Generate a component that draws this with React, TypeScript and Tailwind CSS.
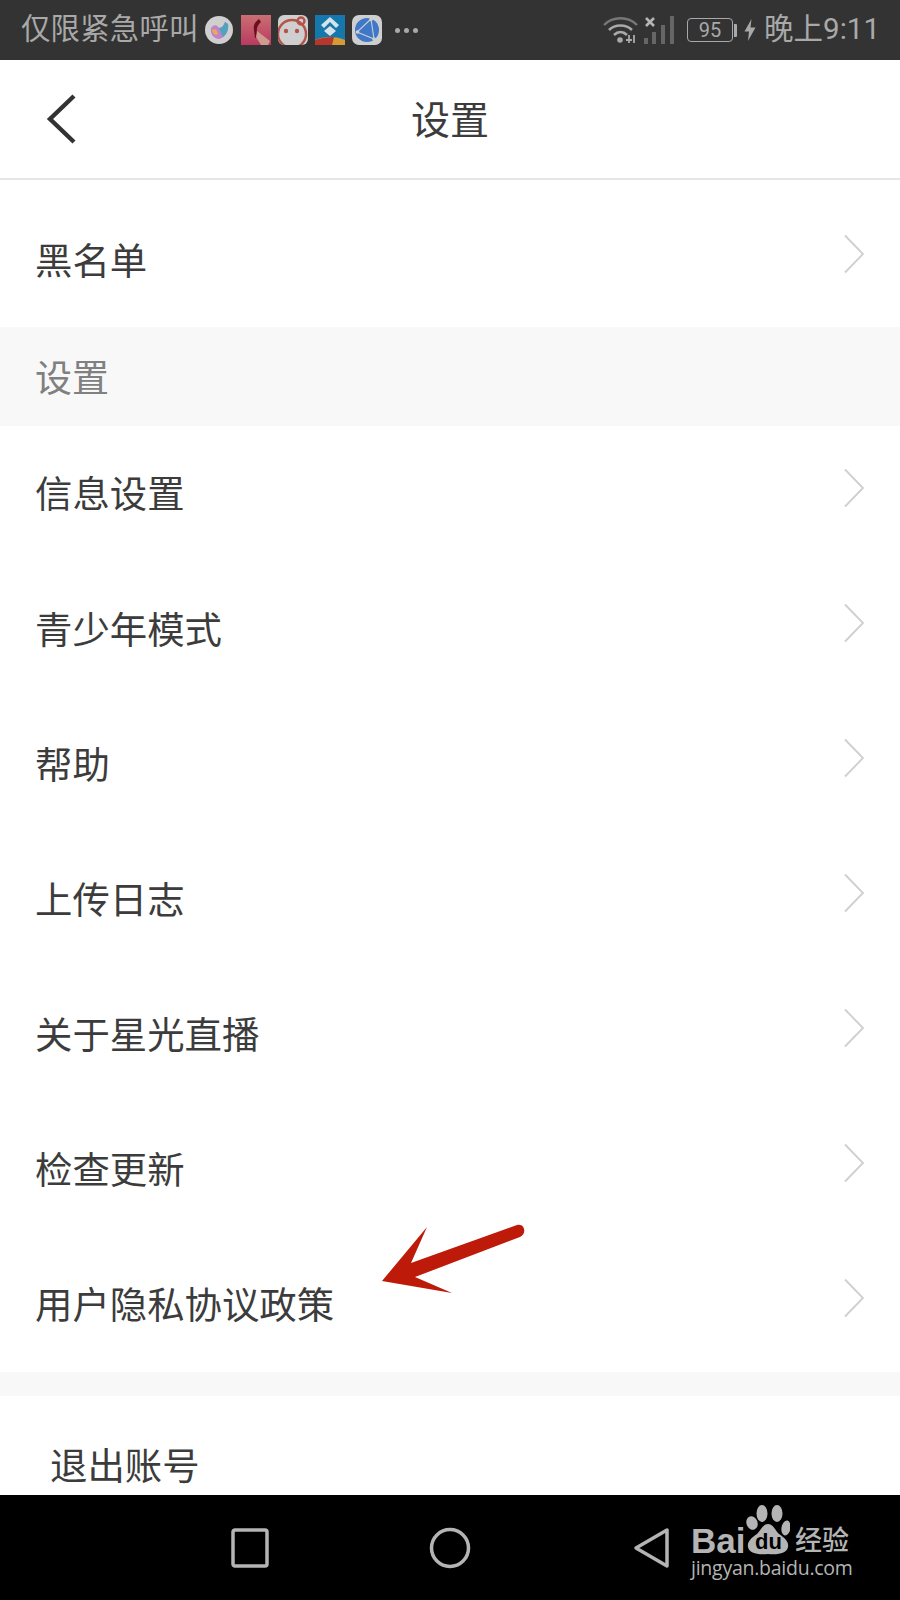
import React from 'react';

const cjk = "font-['Roboto','Noto_Sans_CJK_SC',sans-serif]";

const rows = ['信息设置', '青少年模式', '帮助', '上传日志', '关于星光直播', '检查更新', '用户隐私协议政策'];

const Chevron = () => (
  <svg width="22" height="40" viewBox="0 0 22 40" fill="none" className="mb-3">
    <path d="M2 1.5 L20 20 L2 38.5" stroke="#cfcfcf" strokeWidth="1.8" />
  </svg>
);

const Row = ({ label, className }: { label: string; className: string }) => (
  <div className={`flex items-center justify-between pl-[35px] pr-[35px] text-[37.4px] text-[#3c3c3c] ${className}`}>
    <span className="mt-[4px]">{label}</span>
    <Chevron />
  </div>
);

const NotificationIcons = () => (
  <div className="ml-[6px] flex items-center gap-[7px]">
    <svg width="30" height="30" viewBox="0 0 30 30" className="-ml-[1px]">
      <circle cx="15" cy="15" r="14" fill="#cfcfcf" />
      <path d="M7 13 C10 9 13 10 15 13 C18 13 20 10 21 7 L24 9 C25 17 20 24 14 24 C9 23 6 18 7 13 Z" fill="#c482c6" />
      <path d="M15 13 C18 13 20 10 21 7 L24 9 C25 14 23 19 19 22 Z" fill="#4fa3bd" />
      <path d="M8 15 C11 13 13 15 14 19 C12 21 9 19 8 15 Z" fill="#e6ad58" />
    </svg>
    <svg width="30" height="30" viewBox="0 0 30 30">
      <defs>
        <linearGradient id="redIcon" x1="0" y1="0" x2="0" y2="1">
          <stop offset="0" stopColor="#c96f73" />
          <stop offset="1" stopColor="#b93a60" />
        </linearGradient>
      </defs>
      <rect width="30" height="30" fill="url(#redIcon)" />
      <path d="M18 4 C14 7 12 10 13 15 L14 23 L17 22 C15 17 15 11 20 7 Z" fill="#6b0f1a" />
      <path d="M16 16 L29 26 L27 30 L20 30 L15 22 Z" fill="#cf9a90" />
    </svg>
    <svg width="30" height="30" viewBox="0 0 30 30">
      <defs>
        <clipPath id="bearIcon">
          <rect width="30" height="30" rx="6" />
        </clipPath>
      </defs>
      <rect width="30" height="30" rx="6" fill="#cfcfcf" />
      <g clipPath="url(#bearIcon)" fill="none" stroke="#b5534a" strokeWidth="2.4">
        <circle cx="14" cy="19" r="14" />
        <circle cx="23" cy="6" r="3.5" />
      </g>
      <circle cx="8" cy="16" r="2.2" fill="#b5534a" />
      <circle cx="19" cy="16" r="2.2" fill="#b5534a" />
    </svg>
    <svg width="30" height="30" viewBox="0 0 30 30">
      <rect width="30" height="30" fill="#1478ad" />
      <path d="M15 2 L24 10 L21 13 L15 7 L9 13 L6 10 Z" fill="#d6e4ea" />
      <path d="M15 11 L21 16 L15 21 L9 16 Z" fill="#d6e4ea" />
      <path d="M0 30 V25 C8 21 22 21 30 25 V30 Z" fill="#d39a35" />
      <path d="M0 30 V25 C5 23 12 22 19 22 L17 30 Z" fill="#b5372e" />
    </svg>
    <svg width="30" height="30" viewBox="0 0 30 30">
      <rect width="30" height="30" rx="7" fill="#cfcfcf" />
      <circle cx="15" cy="15" r="12" fill="#3f78c8" />
      <path d="M19 4 L5 17 L22 24 M19 4 L22 24" stroke="#cfcfcf" strokeWidth="1.1" fill="none" />
      <circle cx="19" cy="4.5" r="1.8" fill="#cfcfcf" />
      <circle cx="5.5" cy="17" r="1.8" fill="#cfcfcf" />
      <circle cx="22" cy="24" r="1.8" fill="#cfcfcf" />
    </svg>
  </div>
);

const StatusBar = () => (
  <div className={`flex h-[60px] shrink-0 items-center bg-[#333333] pl-[21px] pr-[20px] text-[#a9a9a9] ${cjk}`}>
    <span className="text-[29.3px] leading-none tracking-[0.3px]">仅限紧急呼叫</span>
    <NotificationIcons />
    <div className="ml-[13px] flex gap-[4px]">
      <span className="h-[5px] w-[5px] rounded-full bg-[#a9a9a9]" />
      <span className="h-[5px] w-[5px] rounded-full bg-[#a9a9a9]" />
      <span className="h-[5px] w-[5px] rounded-full bg-[#a9a9a9]" />
    </div>
    <div className="ml-auto flex items-center">
      <svg width="36" height="28" viewBox="0 0 36 28" fill="none" stroke="#a9a9a9" className="mr-[5px]">
        <path d="M1 9 C10 0 25 0 34 9" strokeWidth="2.4" stroke="#777" />
        <path d="M6 14 C12 8 23 8 29 14" strokeWidth="2.6" />
        <path d="M11 19 C15 15 20 15 24 19" strokeWidth="2.6" />
        <circle cx="17" cy="24" r="2.8" fill="#a9a9a9" stroke="none" />
        <path d="M26 19 V27 M23 24 H29 M31 19 V27" strokeWidth="1.8" />
      </svg>
      <svg width="30" height="30" viewBox="0 0 30 30" className="mr-[13px]">
        <path d="M2 3 L10 11 M10 3 L2 11" stroke="#b5b5b5" strokeWidth="2.6" />
        <rect x="0" y="23" width="4" height="6" fill="#666" />
        <rect x="8" y="17" width="4" height="12" fill="#666" />
        <rect x="17" y="10" width="4" height="19" fill="#666" />
        <rect x="26" y="1" width="4" height="28" fill="#666" />
      </svg>
      <div className="flex h-[24px] w-[46px] items-center justify-center rounded-[4px] border border-[#a9a9a9] font-['Roboto',sans-serif] text-[20px] leading-none">
        95
      </div>
      <span className="ml-[1px] h-[13px] w-[3px] rounded-r-[1px] bg-[#a9a9a9]" />
      <svg width="12" height="22" viewBox="0 0 12 22" className="ml-[7px]">
        <path d="M7.5 0 L0.5 12.5 H5 L4 22 L11.5 8.5 H6.5 Z" fill="#a9a9a9" />
      </svg>
      <span className="ml-[8px] text-[29.5px] leading-none">晚上9:11</span>
    </div>
  </div>
);

const BaiduLogo = () => (
  <div className="absolute left-[691px] top-[10px] h-[75px] w-[162px] text-[#b4b4b4]">
    <span className="absolute left-0 top-[21px] font-['Liberation_Sans',sans-serif] text-[35px] font-bold leading-[30px]">
      Bai
    </span>
    <svg width="44" height="50" viewBox="0 0 44 50" className="absolute left-[55px] top-0" fill="#b4b4b4">
      <ellipse cx="16" cy="8.5" rx="5.5" ry="8.5" />
      <ellipse cx="31" cy="8.5" rx="5.5" ry="8.5" />
      <ellipse cx="6" cy="18" rx="5.5" ry="7" transform="rotate(-20 6 18)" />
      <ellipse cx="40" cy="23" rx="4.5" ry="7.5" transform="rotate(10 40 23)" />
      <path d="M22 19 C27 19 29 25 33 29 C39 33 43 37 42 42 C41 48 33 50 22 49 C11 50 3 48 2 42 C1 37 5 33 11 29 C15 25 17 19 22 19 Z" />
    </svg>
    <span className="absolute left-[64px] top-[24px] font-['Liberation_Sans',sans-serif] text-[22px] font-bold leading-[26px] text-black">
      du
    </span>
    <span className={`absolute left-[104px] top-[22px] whitespace-nowrap text-[27px] font-medium leading-[28px] ${cjk}`}>
      经验
    </span>
    <span className="absolute left-0 top-[52px] whitespace-nowrap font-['Open_Sans',sans-serif] text-[19.5px] leading-[22px] tracking-[-0.25px]">
      jingyan.baidu.com
    </span>
  </div>
);

const NavBar = () => (
  <div className="relative flex h-[105px] shrink-0 items-start bg-black pt-[33px]">
    <svg width="38" height="40" viewBox="0 0 38 40" fill="none" className="ml-[231px]">
      <rect x="2" y="2" width="34" height="36" rx="2" stroke="#b4b4b4" strokeWidth="3.5" />
    </svg>
    <svg width="42" height="42" viewBox="0 0 42 42" fill="none" className="ml-[160px] -mt-[1px]">
      <circle cx="21" cy="21" r="18.5" stroke="#b4b4b4" strokeWidth="3.5" />
    </svg>
    <svg width="38" height="42" viewBox="0 0 38 42" fill="none" className="ml-[162px] -mt-[1px]">
      <path d="M34 3 V39 L3 21 Z" stroke="#b4b4b4" strokeWidth="3.5" strokeLinejoin="round" />
    </svg>
    <BaiduLogo />
  </div>
);

export default function App() {
  return (
    <div className={`relative flex h-[1600px] w-[900px] flex-col overflow-hidden bg-white ${cjk}`}>
      <StatusBar />

      {/* Header */}
      <div className="grid h-[120px] shrink-0 grid-cols-[1fr_auto_1fr] items-center border-b-2 border-[#e6e6e6]">
        <svg width="32" height="52" viewBox="0 0 32 52" fill="none" className="ml-[45px]">
          <path d="M29 3 L5 26 L29 49" stroke="#333" strokeWidth="4.4" />
        </svg>
        <span className="pt-[4px] text-[39px] leading-none text-[#3c3c3c]">设置</span>
        <span />
      </div>

      <Row label="黑名单" className="h-[147px] shrink-0 pt-[13px]" />

      <div className="flex h-[99px] shrink-0 items-center bg-[#f8f8f8] pl-[35px] pt-[6px] text-[37px] text-[#808080]">设置</div>

      {rows.map((label) => (
        <Row key={label} label={label} className="h-[135.1px] shrink-0" />
      ))}

      <div className="h-[24px] shrink-0 bg-[#f8f8f8]" />

      <div className="h-[99px] shrink-0 pl-[50px] pt-[46px] text-[37.4px] leading-[50px] text-[#3c3c3c]">退出账号</div>

      <NavBar />

      {/* red annotation arrow */}
      <svg width="160" height="80" viewBox="0 0 160 80" className="absolute left-[375px] top-[1220px]">
        <path
          d="M7 61 L52 7 L36 43 L142 5 C150 3 152 14 145 17 L40 57 L77 73 Z"
          fill="#bd1a0a"
        />
      </svg>
    </div>
  );
}
